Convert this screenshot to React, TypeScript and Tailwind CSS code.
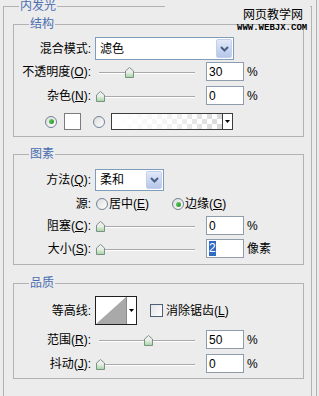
import React from "react";

const FONT = '"Liberation Sans", "Noto Sans CJK SC", sans-serif';

function Group({ title, className, legendClass, children }: { title: string; className: string; legendClass: string; children: React.ReactNode }) {
  return (
    <fieldset className={`border border-[#b2b2b2] ${className}`}>
      <legend className={`ml-[15px] px-[1px] text-[12px] text-[#4b6eaf] ${legendClass}`}>{title}</legend>
      {children}
    </fieldset>
  );
}

function Label({ children }: { children: React.ReactNode }) {
  return <div className="w-[77px] shrink-0 text-right text-[12px] leading-[14px] text-black whitespace-nowrap">{children}</div>;
}

function Chevron() {
  return (
    <svg width="9" height="6" viewBox="0 0 9 6">
      <path d="M1 1 L4.5 4.5 L8 1" stroke="#4a5f86" strokeWidth="2" fill="none" />
    </svg>
  );
}

function Select({ widthClass, value }: { widthClass: string; value: string }) {
  return (
    <div className={`ml-[4px] flex h-full items-stretch border border-[#7f9db9] bg-white ${widthClass}`}>
      <div className="flex flex-1 items-center pl-[4px] text-[12px] text-black">{value}</div>
      <div className="m-[1px] flex w-[16px] items-center justify-center rounded-[2px] border border-[#c3d0ec] bg-gradient-to-b from-[#e2e9f8] to-[#b5c6e9]">
        <Chevron />
      </div>
    </div>
  );
}

function Thumb() {
  return (
    <svg width="9" height="11" viewBox="0 0 9 11">
      <defs>
        <linearGradient id="tg" x1="0" y1="0" x2="0" y2="1">
          <stop offset="0" stopColor="#f6f6f6" />
          <stop offset="0.5" stopColor="#e6ece6" />
          <stop offset="1" stopColor="#9ed69a" />
        </linearGradient>
      </defs>
      <path d="M4.5 0.5 L8.5 4 L8.5 10.5 L0.5 10.5 L0.5 4 Z" fill="url(#tg)" stroke="#7d8f86" strokeWidth="1" />
    </svg>
  );
}

function Slider({ value }: { value: number }) {
  return (
    <div className="relative ml-[4px] h-full w-[105px] shrink-0">
      <div className="ml-[4px] mt-[11px] h-[2px] w-[96px] border-t border-[#a8a8a8] border-b border-b-white bg-[#d8d8d8]" />
      <div className="absolute top-[6px]" style={{ left: 1 + value * 0.95 }}>
        <Thumb />
      </div>
    </div>
  );
}

function Input({ children }: { children: React.ReactNode }) {
  return (
    <div className="ml-[6px] flex h-[19px] w-[38px] shrink-0 items-center border border-[#8f9cab] bg-white pl-[2px] text-[12px] leading-[14px] text-black">
      {children}
    </div>
  );
}

function SliderRow({ label, value, unit, className, inputContent }: { label: React.ReactNode; value: number; unit: string; className: string; inputContent?: React.ReactNode }) {
  return (
    <div className={`flex h-[21px] items-center ${className}`}>
      <Label>{label}</Label>
      <Slider value={value} />
      <Input>{inputContent ?? String(value)}</Input>
      <div className="ml-[3px] text-[12px] leading-[14px] text-black">{unit}</div>
    </div>
  );
}

function Radio({ checked }: { checked?: boolean }) {
  return (
    <div className="flex h-[12px] w-[12px] shrink-0 items-center justify-center rounded-full border border-[#6f8299] bg-gradient-to-br from-[#dcdcdc] to-white">
      {checked && <div className="h-[5px] w-[5px] rounded-full bg-gradient-to-br from-[#6ad16a] to-[#1f8f1f]" />}
    </div>
  );
}

export default function App() {
  return (
    <div className="h-[396px] w-[319px] overflow-hidden bg-[#ececec]" style={{ fontFamily: FONT }}>
      <div className="relative h-[396px] w-[317px] border-r border-[#b2b2b2]">
        <Group title="内发光" legendClass="leading-[13px]" className="ml-[3px] w-[309px] pb-[40px]">
          {/* 结构 */}
          <Group title="结构" legendClass="leading-[11px]" className="ml-[9px] mt-[6px] w-[291px] pb-[5px]">
            <div className="mt-[7px] flex h-[23px] items-center">
              <Label>混合模式:</Label>
              <Select widthClass="w-[139px]" value="滤色" />
            </div>
            <SliderRow className="mt-[1px]" label={<>不透明度(<u>O</u>):</>} value={30} unit="%" />
            <SliderRow className="mt-[3px]" label={<>杂色(<u>N</u>):</>} value={0} unit="%" />
            <div className="mt-[6px] flex h-[19px] items-center">
              <div className="ml-[31px]"><Radio checked /></div>
              <div className="ml-[7px] h-[17px] w-[17px] border border-[#7c7c7c] bg-white" />
              <div className="ml-[12px]"><Radio /></div>
              <div className="ml-[6px] flex h-[17px] w-[122px] border border-[#3c3c3c]">
                <div className="flex-1 bg-[repeating-conic-gradient(#d9d9d9_0%_25%,#ffffff_0%_50%)] bg-[length:10px_10px]">
                  <div className="h-full w-full bg-gradient-to-r from-white via-white/70 to-transparent" />
                </div>
                <div className="flex w-[10px] items-center justify-center border-l border-[#3c3c3c] bg-white">
                  <svg width="5" height="3" viewBox="0 0 5 3"><path d="M0 0 L5 0 L2.5 3 Z" fill="#000" /></svg>
                </div>
              </div>
            </div>
          </Group>

          {/* 图素 */}
          <Group title="图素" legendClass="leading-[11px]" className="ml-[9px] mt-[12px] w-[291px] pb-[5px]">
            <div className="mt-[9px] flex h-[22px] items-center">
              <Label>方法(<u>Q</u>):</Label>
              <Select widthClass="w-[69px]" value="柔和" />
            </div>
            <div className="mt-[4px] flex h-[18px] items-center text-[12px] leading-[14px] text-black">
              <Label>源:</Label>
              <div className="ml-[5px] flex w-[76px] items-center">
                <Radio />
                <span className="ml-[1px]">居中(<u>E</u>)</span>
              </div>
              <div className="flex items-center">
                <Radio checked />
                <span className="ml-[1px]">边缘(<u>G</u>)</span>
              </div>
            </div>
            <SliderRow className="mt-[2px]" label={<>阻塞(<u>C</u>):</>} value={0} unit="%" />
            <SliderRow
              className="mt-[2px]"
              label={<>大小(<u>S</u>):</>}
              value={0}
              unit="像素"
              inputContent={<span className="bg-[#316ac5] leading-[15px] text-white">2</span>}
            />
          </Group>

          {/* 品质 */}
          <Group title="品质" legendClass="leading-[11px]" className="ml-[9px] mt-[13px] w-[291px] pb-[4px]">
            <div className="mt-[7px] flex h-[29px] items-center">
              <Label>等高线:</Label>
              <div className="ml-[4px] flex h-[29px] w-[42px] border border-[#202020] bg-white">
                <svg width="30" height="27" viewBox="0 0 30 27" className="shrink-0">
                  <polygon points="0,27 30,0 30,27" fill="#a9a9a9" />
                </svg>
                <div className="flex flex-1 items-center justify-center border-l border-[#8a8a8a]">
                  <svg width="5" height="3" viewBox="0 0 5 3"><path d="M0 0 L5 0 L2.5 3 Z" fill="#000" /></svg>
                </div>
              </div>
              <div className="ml-[13px] h-[13px] w-[13px] border border-[#4d6078] bg-gradient-to-br from-[#e4e4e4] to-white" />
              <span className="ml-[3px] text-[12px] leading-[14px] text-black">消除锯齿(<u>L</u>)</span>
            </div>
            <SliderRow className="mt-[4px]" label={<>范围(<u>R</u>):</>} value={50} unit="%" />
            <SliderRow className="mt-[3px]" label={<>抖动(<u>J</u>):</>} value={0} unit="%" />
          </Group>
        </Group>

        {/* watermark */}
        <div className="absolute left-[165px] top-0 h-[19px] w-[145px] bg-[#ececec]" />
        <div className="absolute left-[243px] top-[7px] text-[12px] leading-[14px] text-black" style={{ fontFamily: '"Noto Sans CJK SC", sans-serif' }}>
          网页教学网
        </div>
        <div className="absolute left-[237px] top-[23px] text-[9px] font-bold leading-[10px] text-black" style={{ fontFamily: '"Liberation Mono", monospace' }}>
          WWW.WEBJX.COM
        </div>
      </div>
    </div>
  );
}
